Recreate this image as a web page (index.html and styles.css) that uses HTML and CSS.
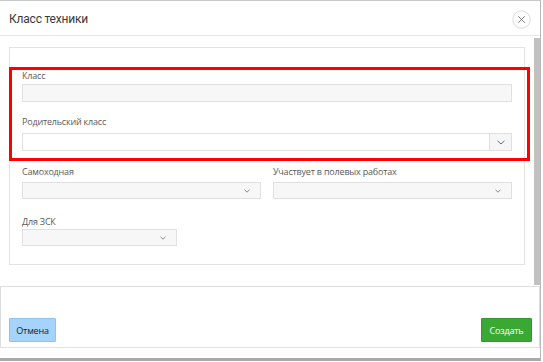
FILE: index.html
```html
<!DOCTYPE html>
<html lang="ru">
<head>
<meta charset="utf-8">
<title>Класс техники</title>
<link rel="stylesheet" href="styles.css">
</head>
<body>
<div class="modal">
  <header class="modal-header">
    <h1 class="modal-title">Класс техники</h1>
    <button class="close-btn" aria-label="Закрыть">
      <svg width="19" height="19" viewBox="0 0 19 19">
        <circle cx="9.5" cy="9.5" r="8.7" fill="#fff" stroke="#d9d9d9" stroke-width="1"/>
        <path d="M6.3 6.3 L12.7 12.7 M12.7 6.3 L6.3 12.7" stroke="#777" stroke-width="1" fill="none"/>
      </svg>
    </button>
  </header>
  <div class="modal-body">
    <div class="body-content">
      <div class="card">
        <div class="field field-1">
          <label class="label">Класс</label>
          <div class="input input-disabled h18"></div>
        </div>
        <div class="field field-2">
          <label class="label">Родительский класс</label>
          <div class="input input-group h18">
            <div class="input-grow"></div>
            <div class="addon">
              <svg width="8" height="5" viewBox="0 0 8 5"><path d="M0.5 0.8 L4 4 L7.5 0.8" stroke="#5f6f88" stroke-width="1" fill="none"/></svg>
            </div>
          </div>
        </div>
        <div class="field-row">
          <div class="field">
            <label class="label">Самоходная</label>
            <div class="input input-disabled select h17">
              <svg width="6" height="4" viewBox="0 0 6 4"><path d="M0.5 0.8 L3 3.2 L5.5 0.8" stroke="#8a8a8a" stroke-width="1" fill="none"/></svg>
            </div>
          </div>
          <div class="field">
            <label class="label">Участвует в полевых работах</label>
            <div class="input input-disabled select h17">
              <svg width="6" height="4" viewBox="0 0 6 4"><path d="M0.5 0.8 L3 3.2 L5.5 0.8" stroke="#8a8a8a" stroke-width="1" fill="none"/></svg>
            </div>
          </div>
        </div>
        <div class="field field-4">
          <label class="label">Для ЗСК</label>
          <div class="input input-disabled select h17 narrow">
            <svg width="6" height="4" viewBox="0 0 6 4"><path d="M0.5 0.8 L3 3.2 L5.5 0.8" stroke="#8a8a8a" stroke-width="1" fill="none"/></svg>
          </div>
        </div>
      </div>
    </div>
    <div class="scrollbar"></div>
  </div>
  <footer class="modal-footer">
    <button class="btn btn-cancel">Отмена</button>
    <button class="btn btn-create">Создать</button>
  </footer>
  <div class="highlight"></div>
</div>
</body>
</html>
```

FILE: styles.css
```css
* { box-sizing: border-box; }
html, body { margin: 0; padding: 0; background: #fff; }
body { width: 543px; height: 362px; overflow: hidden; }

.modal {
  position: relative;
  width: 541px;
  height: 361px;
  border-top: 1px solid #c8c8c8;
  border-right: 1px solid #b9b9b9;
  border-bottom: 3px solid #a9a9a9;
  background: #fff;
  display: flex;
  flex-direction: column;
}

.modal-header {
  height: 35px;
  border-bottom: 1px solid #e6e6e6;
  display: flex;
  align-items: center;
  justify-content: space-between;
  padding: 0 9px 0 9px;
  flex: none;
}
.modal-title {
  margin: 0;
  font-family: Roboto, "Liberation Sans", sans-serif;
  font-weight: 400;
  font-size: 12px;
  letter-spacing: -0.2px;
  color: #3a3a3a;
  position: relative;
  top: 1px;
}
.close-btn {
  border: 0;
  padding: 0;
  background: none;
  width: 19px;
  height: 19px;
  display: flex;
  position: relative;
  top: 1px;
}

.modal-body {
  height: 250px;
  display: flex;
  flex: none;
}
.body-content {
  flex: 1;
  padding: 11px 9px 0 9px;
}
.scrollbar {
  width: 6px;
  margin: 2px 0 1px 0;
  background: #c1c1c1;
}

.card {
  border: 1px solid #e3e3e3;
  padding: 22px 12px 18px 12px;
  font-family: "Open Sans", "Liberation Sans", sans-serif;
}

.field { display: flex; flex-direction: column; }
.label {
  font-size: 9px;
  line-height: 12px;
  color: #5a5a5a;
  letter-spacing: -0.2px;
}
.field-1 .label { margin-bottom: 2px; }
.field-2 { margin-top: 14px; }
.field-2 .label { margin-bottom: 5px; }
.field-row {
  margin-top: 15px;
  display: grid;
  grid-template-columns: 1fr 1fr;
  column-gap: 12px;
}
.field-row .label { margin-bottom: 4px; }
.field-4 { margin-top: 17px; }
.field-4 .label { margin-bottom: 1px; }

.input {
  border: 1px solid #e0e0e0;
  background: #fff;
}
.h18 { height: 18px; }
.h17 { height: 17px; }
.input-disabled { background: #f7f7f7; }

.input-group { display: flex; }
.input-grow { flex: 1; }
.addon {
  width: 22px;
  border-left: 1px solid #e0e0e0;
  background: #f6f6f6;
  display: flex;
  align-items: center;
  justify-content: center;
}

.select {
  display: flex;
  align-items: center;
  justify-content: flex-end;
  padding-right: 10px;
}
.narrow { width: 155px; }

.modal-footer {
  flex: none;
  height: 62px;
  border: 1px solid #dedede;
  border-bottom-color: #e2e2e2;
  display: flex;
  align-items: flex-end;
  justify-content: space-between;
  padding: 0 7px 5px 8px;
}
.btn {
  height: 24px;
  font-family: "Open Sans", "Liberation Sans", sans-serif;
  font-size: 9px;
  border-radius: 1px;
  padding: 0;
  letter-spacing: -0.2px;
}
.btn-cancel {
  width: 47px;
  background: #a6d3fb;
  border: 1px solid #8fc2ef;
  color: #222;
}
.btn-create {
  width: 51px;
  background: #3aa934;
  border: 1px solid #33982d;
  color: #fff;
}

.highlight {
  position: absolute;
  left: 9px;
  top: 66px;
  width: 521px;
  height: 94px;
  border: 3px solid #ff0000;
  pointer-events: none;
}
```
